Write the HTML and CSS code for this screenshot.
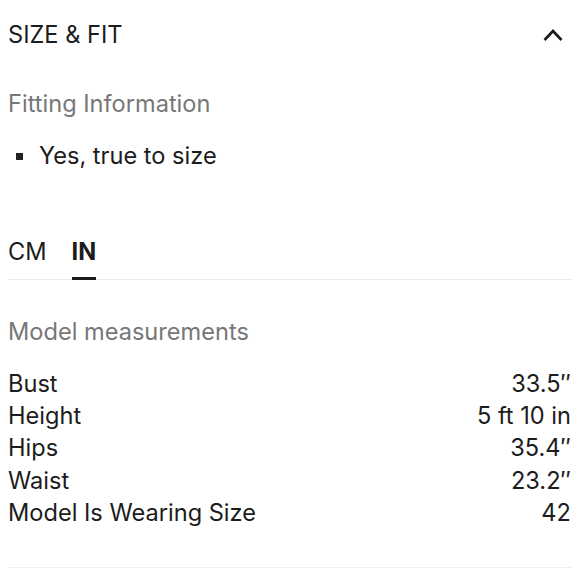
FILE: index.html
```html
<!DOCTYPE html>
<html lang="en">
<head>
<meta charset="utf-8">
<link rel="stylesheet" href="styles.css">
</head>
<body>
<section class="panel">
  <div class="head">
    <h2 class="title">SIZE &amp; FIT</h2>
    <svg class="chevron" width="20" height="14" viewBox="0 0 20 14"><path d="M1.5 12 L10 3 L18.5 12" fill="none" stroke="#1a1a1a" stroke-width="2.6"/></svg>
  </div>
  <h3 class="label fit-label">Fitting Information</h3>
  <ul class="bullets">
    <li>Yes, true to size</li>
  </ul>
  <div class="tabs">
    <span class="tab">CM</span>
    <span class="tab active">IN</span>
  </div>
  <h3 class="label model-label">Model measurements</h3>
  <dl class="rows">
    <div class="row"><dt>Bust</dt><dd>33.5″</dd></div>
    <div class="row"><dt>Height</dt><dd>5 ft 10 in</dd></div>
    <div class="row"><dt>Hips</dt><dd>35.4″</dd></div>
    <div class="row"><dt>Waist</dt><dd>23.2″</dd></div>
    <div class="row"><dt>Model Is Wearing Size</dt><dd>42</dd></div>
  </dl>
  <div class="divider"></div>
</section>
</body>
</html>
```
FILE: styles.css
```css
html, body { margin: 0; padding: 0; background: #fff; }
body {
  font-family: Inter, "Liberation Sans", Arial, sans-serif;
  font-size: 23.6px;
  color: #1c1c1c;
}
.panel { padding: 18px 8px 0 8px; }
.head {
  display: flex;
  justify-content: space-between;
  align-items: center;
  height: 33px;
}
.title { margin: 0; font-size: 23.6px; font-weight: 400; line-height: 33px; }
.chevron { margin-right: 9px; margin-top: 1px; }
.label {
  margin: 0;
  font-size: 23.6px;
  font-weight: 400;
  color: #777;
  line-height: 32.5px;
}
.fit-label { margin-top: 37px; }
.bullets {
  list-style: none;
  margin: 19px 0 0 0;
  padding: 0;
  line-height: 32.5px;
}
.bullets li { display: flex; align-items: center; }
.bullets li::before {
  content: "";
  width: 7px;
  height: 7px;
  background: #222;
  margin: 2px 16px 0 8px;
}
.tabs {
  display: flex;
  gap: 25px;
  margin-top: 64px;
  border-bottom: 1px solid #ececec;
}
.tab {
  line-height: 32.5px;
  padding-bottom: 8px;
  margin-bottom: -1px;
  border-bottom: 3px solid transparent;
}
.tab.active { font-weight: 700; border-bottom-color: #1a1a1a; }
.model-label { margin-top: 36px; }
.rows { margin: 20px 0 0 0; }
.row {
  display: flex;
  justify-content: space-between;
  line-height: 32.2px;
}
.row dt, .row dd { margin: 0; }
.row dd { margin-right: 1px; }
.divider { margin-top: 38px; border-top: 1px solid #efefef; }
```
